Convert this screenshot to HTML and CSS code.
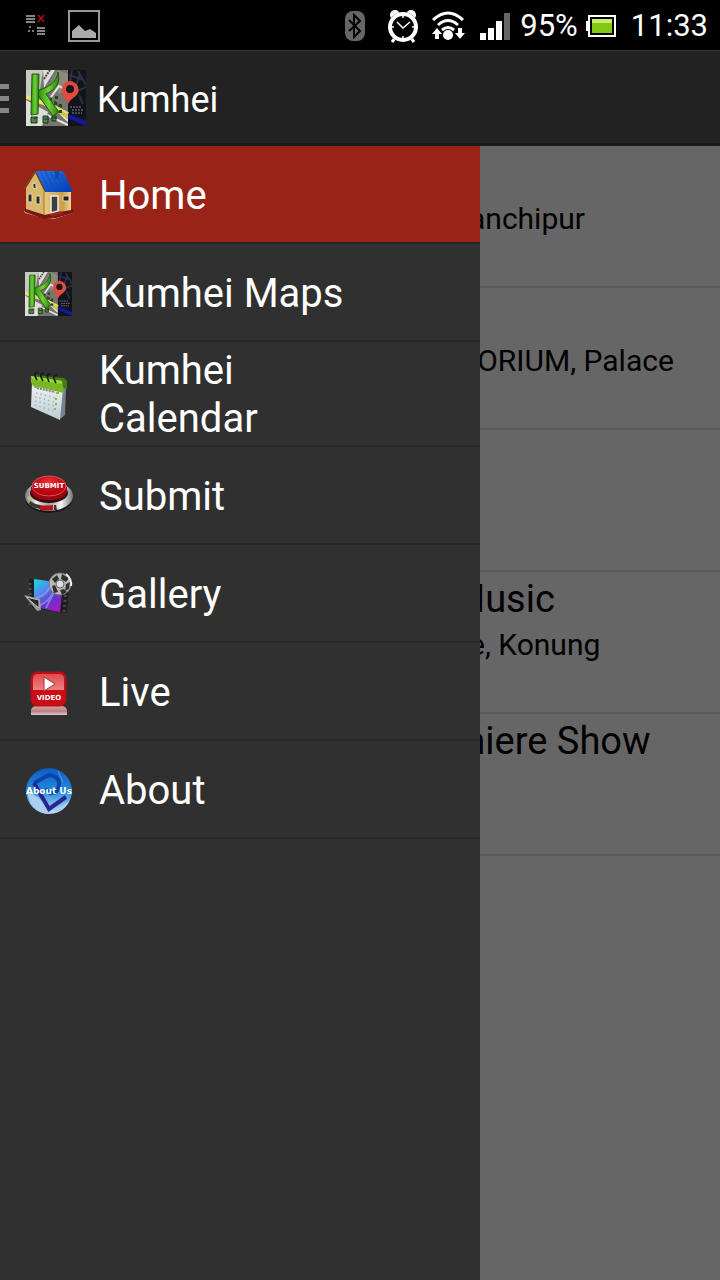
FILE: index.html
```html
<!DOCTYPE html>
<html lang="en">
<head>
  <meta charset="UTF-8">
  <meta name="viewport" content="width=device-width, initial-scale=1">
  <title>Kumhei</title>
  <link rel="stylesheet" href="styles.css">
</head>
<body>
  <!-- Shared logo -->
  <svg class="sprite" aria-hidden="true">
    <defs>
      <linearGradient id="green" x1="0" y1="0" x2="1" y2="0">
        <stop offset="0" stop-color="#2c8a12"/><stop offset=".5" stop-color="#6fd335"/><stop offset="1" stop-color="#2b7d12"/>
      </linearGradient>
    </defs>
    <symbol id="logo" viewBox="0 0 60 56" preserveAspectRatio="none">
      <rect width="60" height="56" fill="#77756f"/>
      <path d="M0 0h17l-4 26L0 28z" fill="#c9c9c3"/>
      <path d="M17 0h12L18 18zM0 30l22 12-6 14H0z" fill="#dddcd8"/>
      <path d="M32 0l-8 15 10 9 8-9V4z" fill="#8c8981"/>
      <path d="M25 27l8-11 9 5M25 34l17 17M12 55l9-10 21 10M1 49l13-9" fill="none" stroke="#e4e4e0" stroke-width="2"/>
      <path d="M18 9l6-9M28 31l13 13" stroke="#44443f" stroke-width="2" stroke-dasharray="2 1"/>
      <path d="M42 0h18v56H42z" fill="#12141d"/>
      <path d="M43 5l15 5M46 0l-2 14M52 1l8 14M43 25l17-8M54 4l-6 17M53 25l4 9" fill="none" stroke="#2c3040" stroke-width="2"/>
      <path d="M0 27l26 9 16 8" fill="none" stroke="#e9e36a" stroke-width="4"/>
      <path d="M30 38l12 6v5l-12-7z" fill="#cdc653"/>
      <path d="M42 44l18 7v5l-18-8z" fill="#1218a0"/>
      <path d="M5 47h6v6H5zM17 46h5v7h-5zM26 46h4v5h-4z" fill="#5d7a55" stroke="#143c12"/>
      <path d="M8 49l4-2M18 49h5M25 48h6" stroke="#143c12"/>
      <path d="M24 28h2v3h-2zM28 32h3v3h-3zM29 26h3v3h-3zM33 34h3v3h-3zM33 40h3v3h-3z" fill="#1c4a18"/>
      <path d="M6 4h7l-1 40-7 1z" fill="url(#green)" stroke="#1b5a0c"/>
      <path d="M32 2c3 11-2 17-12 22l13 18-6 4L12 25l1-5C24 17 30 12 32 2z" fill="url(#green)" stroke="#1b5a0c"/>
      <path d="M44 11a9 9 0 0 1 8 12c-2 4-7 5-10 11-1-5-7-8-6-15a8 8 0 0 1 8-8z" fill="#e04b3c"/>
      <circle cx="44" cy="19" r="4" fill="#16171e"/>
      <path d="M44 37h12M46 40h11M46 43h10" stroke="#85858b" stroke-width="1" stroke-dasharray="2 1"/>
    </symbol>
  </svg>

  <div class="screen">
    <div class="status-bar">
      <div class="status-left">
        <svg width="20" height="22" viewBox="0 0 20 22" aria-hidden="true">
          <path d="M0 1h9M0 4h9M0 7h9M11 13h8M11 16h8M11 19h8" stroke="#858585" stroke-width="2"/>
          <path d="M12 0l6 7M18 0l-6 7" stroke="#b50d0d" stroke-width="1.5"/>
          <path d="M3 11h2v2H3zM2 15h2v2H2zM6 15h2v2H6z" fill="#777"/>
        </svg>
        <svg width="32" height="32" viewBox="0 0 32 32" aria-hidden="true">
          <rect x="1" y="1" width="30" height="30" fill="none" stroke="#999" stroke-width="2"/>
          <path d="M4 28v-7l7-6 6 6 5-2 6 4v5z" fill="#aaa"/>
        </svg>
      </div>
      <div class="status-right">
        <svg class="bluetooth" width="20" height="30" viewBox="0 0 20 30" aria-hidden="true">
          <rect width="20" height="30" rx="8" fill="#666"/>
          <path d="M4 9l11 11-6 6V4l6 6L4 20" fill="none" stroke="#000" stroke-width="2"/>
        </svg>
        <svg class="alarm" width="30" height="33" viewBox="0 0 30 33" aria-hidden="true">
          <path d="M7 28l-3 4M23 28l3 4" stroke="#fff" stroke-width="3"/>
          <circle cx="7" cy="5" r="5" fill="#fff"/><circle cx="23" cy="5" r="5" fill="#fff"/>
          <circle cx="15" cy="17" r="15" fill="#000"/>
          <circle cx="15" cy="17" r="13" fill="#000" stroke="#fff" stroke-width="4"/>
          <path d="M9 12l6 6 7-6M15 5v3M15 26v3M3 17h3M24 17h3" fill="none" stroke="#fff" stroke-width="1.5"/>
        </svg>
        <svg class="wifi" width="32" height="30" viewBox="0 0 32 30" aria-hidden="true">
          <path d="M1 9q15-14 30 0M6 14q10-9 20 0M10 19q6-5 12 0" fill="none" stroke="#fff" stroke-width="3"/>
          <circle cx="16" cy="24" r="5" fill="#fff"/>
          <path d="M5 17l5 6H7v5H3v-5H0zM28 28l-5-6h3v-5h4v5h3z" fill="#fff"/>
        </svg>
        <svg class="signal" width="30" height="27" viewBox="0 0 30 27" aria-hidden="true">
          <path d="M0 20h6v7H0zM8 15h6v12H8zM16 8h6v19h-6z" fill="#fff"/>
          <path d="M24 0h6v27h-6z" fill="#666"/>
        </svg>
        <span class="percent">95%</span>
        <svg class="battery" width="30" height="22" viewBox="0 0 30 22" aria-hidden="true">
          <path d="M0 6h3v10H0z" fill="#fff"/>
          <rect x="3" y="1" width="26" height="20" fill="#000" stroke="#fff" stroke-width="2"/>
          <rect x="6" y="4" width="20" height="14" fill="#83c914"/>
          <path d="M6 4h20v4H6z" fill="#c6ed67"/>
        </svg>
        <span class="time">11:33</span>
      </div>
    </div>

    <header class="action-bar">
      <button class="menu-toggle" aria-label="Close menu"><span></span><span></span><span></span></button>
      <svg class="logo" aria-hidden="true"><use href="#logo"/></svg>
      <h1>Kumhei</h1>
    </header>

    <main>
      <nav class="drawer">
        <a class="item active" href="#home">
          <svg viewBox="0 0 50 50" aria-hidden="true">
            <defs>
              <linearGradient id="roof" x1="0" y1="0" x2="1" y2="1"><stop offset="0" stop-color="#2477ec"/><stop offset="1" stop-color="#063bb0"/></linearGradient>
              <linearGradient id="wall"><stop offset="0" stop-color="#e8cc82"/><stop offset=".7" stop-color="#c99e4c"/><stop offset="1" stop-color="#eed594"/></linearGradient>
            </defs>
            <g transform="translate(0 -2)">
              <path d="M0 42l21 6 28-7v3l-19 6-11-1-18-5z" fill="#cdbfbc"/>
              <path d="M1 39l19 6 29-5v4l-17 5-12 1L1 43z" fill="#781713"/>
              <path d="M2 19L12 3l9 18v25L2 40z" fill="#d9b969"/>
              <path d="M20 20h27v21l-27 5z" fill="url(#wall)"/>
              <path d="M20 22v24" stroke="#9b7537"/>
              <path d="M11 1l28 1 10 21H21z" fill="url(#roof)"/>
              <path d="M16 2l10 20M21 2l10 20M26 3l10 18M31 3l10 18M36 4l9 17" stroke="#0c49bc" stroke-width=".7"/>
              <path d="M0 20L11 2l10 20" fill="none" stroke="#704522" stroke-width="1.5"/>
              <path d="M31 1h4v9h-4z" fill="#174ba1"/>
              <path d="M9 14l3 1v5l-3-1zM4 25h4v8H4zM12 27h4v8h-4z" fill="#292e32" stroke="#e5d7b5"/>
              <path d="M27 27h7v15l-7 2z" fill="#3c4145" stroke="#f1ebdc" stroke-width="1.5"/>
              <path d="M39 27h6v5h-6z" fill="#222" stroke="#ead8ad"/>
              <path d="M25 45l12-3 2 3-11 3z" fill="#9c211a"/>
            </g>
          </svg>
          <span>Home</span>
        </a>
        <a class="item" href="#maps">
          <svg viewBox="0 0 50 50" aria-hidden="true"><use href="#logo" x="1" y="3" width="47" height="44"/></svg>
          <span>Kumhei Maps</span>
        </a>
        <a class="item" href="#calendar">
          <svg viewBox="0 0 50 50" aria-hidden="true">
            <defs><linearGradient id="page" x1="0" y1="0" x2="0" y2="1"><stop offset="0" stop-color="#f1f4f5"/><stop offset="1" stop-color="#bdcdd5"/></linearGradient></defs>
            <path d="M38 17l4 1-1 27-6 5z" fill="#75848a"/>
            <path d="M9 5l31 3 3 3v8l-4-1z" fill="#437b13"/>
            <path d="M8 12l31 6-3 32L7 37z" fill="url(#page)"/>
            <path d="M7 6l31 5 2 12-31-7q-3-4-2-10z" fill="#79b822"/>
            <path d="M7 6l31 5v3L8 9z" fill="#9bd43e"/>
            <path d="M13 18l18 4" stroke="#79828a" stroke-width="2" stroke-dasharray="2 1"/>
            <path d="M12 23l20 5M11 27l20 5M11 31l20 5M11 35l19 6" stroke="#a4b1ba" stroke-width="1.5" stroke-dasharray="1.5 3"/>
            <path d="M10 17h3M32 23h3M31 29h2M31 34h2M30 39h2" stroke="#86bb35" stroke-width="2"/>
            <path d="M13 10q-5-8 1-8M19 11q-5-8 1-8M25 12q-4-9 2-8M32 13q-5-8 1-8" fill="none" stroke="#15190f" stroke-width="1.5"/>
          </svg>
          <span>Kumhei Calendar</span>
        </a>
        <a class="item" href="#submit">
          <svg viewBox="0 0 50 50" aria-hidden="true">
            <defs>
              <linearGradient id="chrome"><stop offset="0" stop-color="#777"/><stop offset=".25" stop-color="#eee"/><stop offset=".5" stop-color="#999"/><stop offset=".75" stop-color="#f5f5f5"/><stop offset="1" stop-color="#777"/></linearGradient>
              <radialGradient id="red" cy=".3"><stop offset="0" stop-color="#ef3038"/><stop offset="1" stop-color="#b60710"/></radialGradient>
            </defs>
            <ellipse cx="25" cy="26" rx="24" ry="15" fill="#171717"/>
            <ellipse cx="25" cy="24" rx="24" ry="15" fill="url(#chrome)"/>
            <path d="M6 29q4 3 10 4v4Q9 36 5 32zM30 33l2 0 1 5h-3z" fill="#393629"/>
            <path d="M16 33q6 1 13 0v5q-6 1-13 0z" fill="#b81319"/>
            <path d="M3 25l4-1 1 4-3 1z" fill="#bebd83"/>
            <ellipse cx="25" cy="21" rx="19" ry="10" fill="#3a080b"/>
            <path d="M7 15h36v5q-3 8-18 8T7 20z" fill="#990811"/>
            <ellipse cx="25" cy="14" rx="17" ry="10" fill="url(#red)" stroke="#e64b51"/>
            <text class="submit-text" x="25" y="16" text-anchor="middle">SUBMIT</text>
          </svg>
          <span>Submit</span>
        </a>
        <a class="item" href="#gallery">
          <svg viewBox="0 0 50 50" aria-hidden="true">
            <defs><linearGradient id="film" x1="0" y1="0" x2=".7" y2="1"><stop offset="0" stop-color="#16dbe3"/><stop offset=".4" stop-color="#5386ee"/><stop offset=".7" stop-color="#6134c4"/><stop offset="1" stop-color="#a51ac8"/></linearGradient></defs>
            <path d="M5 9l40 5-2 29-35-5z" fill="#1d1d1d"/>
            <path d="M10 9l29 4-3 29-26-5z" fill="url(#film)"/>
            <path d="M12 28q14-4 15-17M15 36q13-6 17-20M22 38l11-22" fill="none" stroke="#a8bcff" stroke-opacity=".5" stroke-width="2"/>
            <path d="M6 13v22M42 20l-2 22" stroke="#4a4a4a" stroke-width="3" stroke-dasharray="2 3"/>
            <path d="M0 25l16 4 1 11-4 1z" fill="#999"/>
            <path d="M2 27l13 3v8z" fill="#292929" stroke="#bdbdbd"/>
            <circle cx="36" cy="14" r="11" fill="#b9b9b9" stroke="#777"/>
            <path d="M28 9l5-4 2 4-4 4zM38 4l7 4-3 4-5-3zM42 14l4-2-1 7-4 2zM28 16l3-1 3 7-4 1zM36 20l4-1 3 3-5 3z" fill="#303030"/>
            <circle cx="36" cy="14" r="4" fill="#ddd" stroke="#666"/>
            <path d="M42 4q6 5 5 12" fill="none" stroke="#eee" stroke-width="2"/>
          </svg>
          <span>Gallery</span>
        </a>
        <a class="item" href="#live">
          <svg viewBox="0 0 50 50" aria-hidden="true">
            <defs>
              <linearGradient id="shine" x1="0" y1="0" x2="0" y2="1"><stop offset="0" stop-color="#dc4c50"/><stop offset="1" stop-color="#ef8080"/></linearGradient>
              <linearGradient id="reflect" x1="0" y1="0" x2="0" y2="1"><stop offset="0" stop-color="#e0a1a3"/><stop offset=".6" stop-color="#b98083"/><stop offset="1" stop-color="#ddd0d1"/></linearGradient>
            </defs>
            <path d="M7 47v-5q1-4 6-4h24q5 0 6 4v5z" fill="url(#reflect)"/>
            <rect x="7" y="4" width="35" height="34" rx="6" fill="#c90c15" stroke="#a3131a"/>
            <path d="M9 22V11q0-5 5-5h21q5 0 5 5v11z" fill="url(#shine)"/>
            <path d="M20 9l11 7-11 7z" fill="#fff" stroke="#a33"/>
            <text class="video-text" x="25" y="32" text-anchor="middle">VIDEO</text>
          </svg>
          <span>Live</span>
        </a>
        <a class="item" href="#about">
          <svg viewBox="0 0 50 50" aria-hidden="true">
            <defs><linearGradient id="globe" x1="0" y1="0" x2="0" y2="1"><stop offset="0" stop-color="#0f5bc2"/><stop offset=".5" stop-color="#238bdd"/><stop offset="1" stop-color="#c1def4"/></linearGradient></defs>
            <circle cx="25" cy="25" r="23" fill="url(#globe)"/>
            <path d="M3 26q12 2 21 18l3 4Q7 48 3 26zM32 44l13-9q-5 10-14 12z" fill="#aacdf0"/>
            <path d="M10 17l15-8q11 1 10 10-1 9-9 8l-5-4" fill="none" stroke="#0b43ac" stroke-width="4"/>
            <path d="M10 17l15 26 17-12" fill="none" stroke="#27268e" stroke-width="4"/>
            <path d="M34 5l5 11" stroke="#5796df"/>
            <text class="about-text" x="25" y="28" text-anchor="middle">About Us</text>
          </svg>
          <span>About</span>
        </a>
      </nav>

      <ul class="events">
        <li><h2></h2><p>anchipur</p></li>
        <li><h2></h2><p class="long">ITORIUM, Palace</p></li>
        <li><h2></h2><p></p></li>
        <li><h2>Music</h2><p>e, Konung</p></li>
        <li><h2>miere Show</h2><p></p></li>
      </ul>
    </main>
  </div>
</body>
</html>
```
FILE: styles.css
```css
* {
  box-sizing: border-box;
}

body {
  margin: 0;
  font-family: Roboto, "Noto Sans", sans-serif;
  background: #666;
  color: #fff;
}

h1, h2, p, ul {
  margin: 0;
  padding: 0;
  font-weight: normal;
}

.sprite {
  display: block;
  width: 0;
  height: 0;
}

.screen {
  display: flex;
  flex-direction: column;
  min-height: 100vh;
}

/* Status bar */
.status-bar {
  display: flex;
  justify-content: space-between;
  align-items: center;
  height: 50px;
  padding: 2px 12px 0 26px;
  background: #000;
}

.status-left,
.status-right {
  display: flex;
  align-items: center;
}

.status-left {
  gap: 22px;
}

.status-right {
  font-size: 31px;
  line-height: 36px;
}

.bluetooth {
  margin-right: 23px;
}

.alarm {
  margin-right: 14px;
}

.wifi {
  margin-right: 16px;
  overflow: visible;
}

.signal {
  margin-right: 10px;
}

.battery {
  margin: 0 15px 0 8px;
}

/* Action bar */
.action-bar {
  display: flex;
  align-items: center;
  height: 96px;
  padding-top: 2px;
  background: #222;
  border-top: 1px solid #333;
  border-bottom: 3px solid #1a1a1a;
}

.menu-toggle {
  display: flex;
  flex-direction: column;
  gap: 7px;
  width: 9px;
  margin-right: 17px;
  padding: 0;
  border: none;
  background: none;
  cursor: pointer;
}

.menu-toggle span {
  height: 5px;
  background: #85858a;
}

.logo {
  width: 60px;
  height: 56px;
  margin-right: 11px;
}

.action-bar h1 {
  padding-top: 4px;
  font-size: 36px;
  line-height: 48px;
}

/* The drawer and the list share one grid cell */
main {
  display: grid;
  flex: 1;
  grid-template-columns: 1fr;
}

.drawer,
.events {
  grid-area: 1 / 1;
}

.drawer {
  z-index: 1;
  width: 66.667%;
  background: #303030;
}

.item {
  display: flex;
  align-items: center;
  gap: 25px;
  min-height: 98px;
  padding: 5px 96px 2px 24px;
  border-bottom: 2px solid #272727;
  color: #fff;
  font-size: 40px;
  line-height: 48px;
  text-decoration: none;
}

.item svg {
  flex: none;
  width: 50px;
  height: 50px;
}

.item.active {
  background: #992316;
}

.submit-text,
.video-text,
.about-text {
  font-family: "DejaVu Sans", sans-serif;
  font-weight: bold;
  font-size: 7px;
  fill: #fff;
}

.about-text {
  font-size: 9px;
}

/* Dimmed event list */
.events {
  padding-left: calc(66.667% - 28px);
  background: #666;
  color: #000;
  list-style: none;
}

.events li {
  height: 142px;
  padding-top: 5px;
  border-bottom: 2px solid #5b5b5b;
}

.events h2 {
  height: 45px;
  margin-bottom: 5px;
  font-size: 38px;
  line-height: 45px;
}

.events p {
  padding-left: 17px;
  font-size: 30px;
  line-height: 36px;
}

.events p.long {
  padding-left: 0;
}
```
